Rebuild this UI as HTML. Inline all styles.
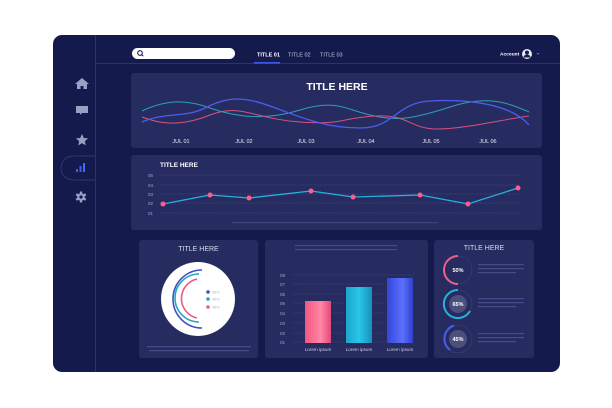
<!DOCTYPE html>
<html><head><style>
html,body{margin:0;padding:0;background:#fff;width:612px;height:408px;overflow:hidden}
svg{display:block}
text{font-family:"Liberation Sans",sans-serif}
</style></head><body>
<svg width="612" height="408" viewBox="0 0 612 408" xmlns="http://www.w3.org/2000/svg">
<defs>
<linearGradient id="gp" x1="0" x2="1"><stop offset="0" stop-color="#f2557f"/><stop offset=".6" stop-color="#ff86a6"/><stop offset="1" stop-color="#e24a78"/></linearGradient>
<linearGradient id="gc" x1="0" x2="1"><stop offset="0" stop-color="#1ba6c9"/><stop offset=".5" stop-color="#28c6ea"/><stop offset="1" stop-color="#1890bb"/></linearGradient>
<linearGradient id="gb" x1="0" x2="1"><stop offset="0" stop-color="#3446d8"/><stop offset=".6" stop-color="#5a70ff"/><stop offset="1" stop-color="#3040c8"/></linearGradient>
</defs>
<rect x="53" y="35" width="507" height="337" rx="9" fill="#151a4c"/>
<line x1="95.5" y1="35" x2="95.5" y2="372" stroke="#2c3270" stroke-width="1"/>
<line x1="96" y1="63.5" x2="560" y2="63.5" stroke="#2c3270"/>
<path d="M82 78 L75 84 L77 84 L77 89 L80.5 89 L80.5 86 L83.5 86 L83.5 89 L87 89 L87 84 L89 84 Z" fill="#9aa0c4"/>
<path d="M76 106 h12 v7 h-6 l-2 2 v-2 h-4 z" fill="#9aa0c4"/>
<path d="M82 134 l1.8 4 4.3 .4 -3.3 2.8 1 4.2 -3.8 -2.3 -3.8 2.3 1 -4.2 -3.3 -2.8 4.3 -.4z" fill="#9aa0c4"/>
<path d="M95.5 156 H73 a12 12 0 0 0 0 24 H95.5" fill="none" stroke="#2f3574"/>
<rect x="76" y="169" width="2" height="3" fill="#3e5cf0"/><rect x="79.5" y="166" width="2" height="6" fill="#3e5cf0"/><rect x="83" y="163" width="2" height="9" fill="#4566ff"/>
<g fill="#9aa0c4"><rect x="79.8" y="191.5" width="2.4" height="11"/><rect x="79.8" y="191.5" width="2.4" height="11" transform="rotate(60 81 197)"/><rect x="79.8" y="191.5" width="2.4" height="11" transform="rotate(120 81 197)"/></g>
<circle cx="81" cy="197" r="3.8" fill="#9aa0c4"/><circle cx="81" cy="197" r="1.6" fill="#151a4c"/>
<rect x="132" y="48" width="103" height="11" rx="5.5" fill="#fff"/>
<circle cx="140" cy="53" r="2.3" fill="none" stroke="#1a1f55" stroke-width="1.1"/><line x1="141.6" y1="54.6" x2="143.2" y2="56.2" stroke="#1a1f55" stroke-width="1.1"/>
<text x="257" y="56.5" font-size="5.5" fill="#fff" font-weight="bold">TITLE 01</text>
<text x="288" y="56.5" font-size="5.5" fill="#c8cbe6">TITLE 02</text>
<text x="320" y="56.5" font-size="5.5" fill="#c8cbe6">TITLE 03</text>
<rect x="254" y="62" width="26" height="1.6" fill="#3f57e8"/>
<text x="500" y="55.5" font-size="4.8" fill="#fff" font-weight="bold">Account</text>
<circle cx="527" cy="54" r="5" fill="#e8e9f2"/><circle cx="527" cy="52.5" r="2" fill="#151a4c"/><path d="M523.5 57.5 a3.5 3 0 0 1 7 0z" fill="#151a4c"/>
<path d="M536.5 53 h3 l-1.5 2z" fill="#666b99"/>
<rect x="131" y="73" width="411" height="75" rx="3" fill="#272c60"/>
<text x="337" y="90" font-size="10.5" fill="#fff" font-weight="bold" text-anchor="middle">TITLE HERE</text>
<path d="M142 111 C165 100,185 99,210 108 S265 121,300 110 S345 109,370 115 S410 120,450 107 S510 104,529 112" fill="none" stroke="#2aa0b8" stroke-width="1"/>
<path d="M142 117 C160 124,180 127,210 115 S255 119,300 122 S340 118,375 116 S410 130,440 129 S505 119,529 116" fill="none" stroke="#d9507d" stroke-width="1"/>
<path d="M142 122 C165 112,185 118,205 108 S240 95,270 106 S325 128,360 128 S395 103,430 101 S510 103,529 125" fill="none" stroke="#4d5df0" stroke-width="1.3"/>
<g font-size="5.5" fill="#e6e8f5" text-anchor="middle">
<text x="181" y="143">JUL 01</text><text x="244" y="143">JUL 02</text><text x="306" y="143">JUL 03</text><text x="366" y="143">JUL 04</text><text x="431" y="143">JUL 05</text><text x="488" y="143">JUL 06</text></g>
<rect x="131" y="155" width="411" height="75" rx="3" fill="#272c60"/>
<text x="160" y="167" font-size="6.5" fill="#fff" font-weight="bold">TITLE HERE</text>
<g stroke="#5a5f96" stroke-width=".5" stroke-dasharray="1 1.5">
<line x1="160" y1="175" x2="520" y2="175"/><line x1="160" y1="185" x2="520" y2="185"/><line x1="160" y1="194" x2="520" y2="194"/><line x1="160" y1="203" x2="520" y2="203"/><line x1="160" y1="213" x2="520" y2="213"/></g>
<g font-size="4.5" fill="#9ea3c8"><text x="148" y="177">05</text><text x="148" y="187">04</text><text x="148" y="196">03</text><text x="148" y="205">02</text><text x="148" y="215">01</text></g>
<polyline points="163,204 210,195 249,198 311,191 353,197 420,195 468,204 518,188" fill="none" stroke="#24b2dc" stroke-width="1.3"/>
<g fill="#ff5c8a"><circle cx="163" cy="204" r="2.5"/><circle cx="210" cy="195" r="2.5"/><circle cx="249" cy="198" r="2.5"/><circle cx="311" cy="191" r="2.5"/><circle cx="353" cy="197" r="2.5"/><circle cx="420" cy="195" r="2.5"/><circle cx="468" cy="204" r="2.5"/><circle cx="518" cy="188" r="2.5"/></g>
<rect x="232" y="222" width="206" height="1.2" fill="#3e4480"/>
<rect x="139" y="240" width="119" height="118" rx="3" fill="#272c60"/>
<text x="198.5" y="251" font-size="7" fill="#d9dbf0" text-anchor="middle">TITLE HERE</text>
<circle cx="198" cy="299" r="37" fill="#fff"/>
<path d="M202 270 A28 28 0 0 0 202 328" fill="none" stroke="#3f4fc8" stroke-width="1.6"/>
<path d="M199 274 A24 24 0 0 0 199 322" fill="none" stroke="#24a6c2" stroke-width="1.6"/>
<path d="M197 279 A20 20 0 0 0 197 318" fill="none" stroke="#ea5a85" stroke-width="1.6"/>
<circle cx="208" cy="292" r="1.8" fill="#3f4fc8"/><circle cx="208" cy="299" r="1.8" fill="#24a6c2"/><circle cx="208" cy="307" r="1.8" fill="#ea5a85"/>
<g font-size="3.8" fill="#a9adcf"><text x="212" y="293.5">55%</text><text x="212" y="300.5">45%</text><text x="212" y="308.5">45%</text></g>
<rect x="147" y="346" width="104" height="1.2" fill="#464c88"/><rect x="149" y="350" width="100" height="1.2" fill="#464c88"/>
<rect x="265" y="240" width="163" height="118" rx="3" fill="#272c60"/>
<rect x="295" y="245" width="102" height="1.2" fill="#464c88"/><rect x="295" y="249" width="102" height="1.2" fill="#464c88"/>
<g stroke="#555a92" stroke-width=".5" stroke-dasharray="1 1.5">
<line x1="293" y1="275" x2="415" y2="275"/><line x1="293" y1="284" x2="415" y2="284"/><line x1="293" y1="294" x2="415" y2="294"/><line x1="293" y1="303" x2="415" y2="303"/><line x1="293" y1="313" x2="415" y2="313"/><line x1="293" y1="323" x2="415" y2="323"/><line x1="293" y1="333" x2="415" y2="333"/><line x1="293" y1="342" x2="415" y2="342"/></g>
<g font-size="4.6" fill="#9ea3c8"><text x="280" y="277">08</text><text x="280" y="286">07</text><text x="280" y="296">06</text><text x="280" y="305">05</text><text x="280" y="315">04</text><text x="280" y="325">03</text><text x="280" y="335">02</text><text x="280" y="344">01</text></g>
<rect x="305" y="301" width="26" height="42" fill="url(#gp)"/>
<rect x="346" y="287" width="26" height="56" fill="url(#gc)"/>
<rect x="387" y="278" width="26" height="65" fill="url(#gb)"/>
<g font-size="4.6" fill="#c8cbe6" text-anchor="middle"><text x="318" y="351">Lorem ipsum</text><text x="359" y="351">Lorem ipsum</text><text x="400" y="351">Lorem ipsum</text></g>
<rect x="434" y="240" width="100" height="118" rx="3" fill="#272c60"/>
<text x="484" y="250" font-size="7" fill="#d9dbf0" text-anchor="middle">TITLE HERE</text>
<g font-size="5.5" fill="#fff" text-anchor="middle" font-weight="bold">
<circle cx="458" cy="270" r="14" fill="none" stroke="#3c4276" stroke-width=".6"/>
<path d="M458 256 A14 14 0 0 0 458 284" fill="none" stroke="#ef5f8c" stroke-width="2"/>
<text x="458" y="272">50%</text>
<circle cx="458" cy="304" r="14" fill="none" stroke="#3c4276" stroke-width=".6"/>
<circle cx="458" cy="304" r="9" fill="#4c4f7e"/>
<path d="M458 290 A14 14 0 1 0 470 311" fill="none" stroke="#23b4dc" stroke-width="2"/>
<text x="458" y="306">65%</text>
<circle cx="458" cy="339" r="14" fill="none" stroke="#3c4276" stroke-width=".6"/>
<circle cx="458" cy="339" r="9" fill="#4c4f7e"/>
<path d="M454 325.5 A14 14 0 0 0 450 350" fill="none" stroke="#4a5cf0" stroke-width="2"/>
<text x="458" y="341">45%</text></g>
<g fill="#464c88">
<rect x="478" y="264" width="46" height="1.2"/><rect x="478" y="268" width="46" height="1.2"/><rect x="478" y="272" width="38" height="1.2"/>
<rect x="478" y="298" width="46" height="1.2"/><rect x="478" y="302" width="46" height="1.2"/><rect x="478" y="306" width="38" height="1.2"/>
<rect x="478" y="333" width="46" height="1.2"/><rect x="478" y="337" width="46" height="1.2"/><rect x="478" y="341" width="38" height="1.2"/></g>
</svg>
</body></html>
